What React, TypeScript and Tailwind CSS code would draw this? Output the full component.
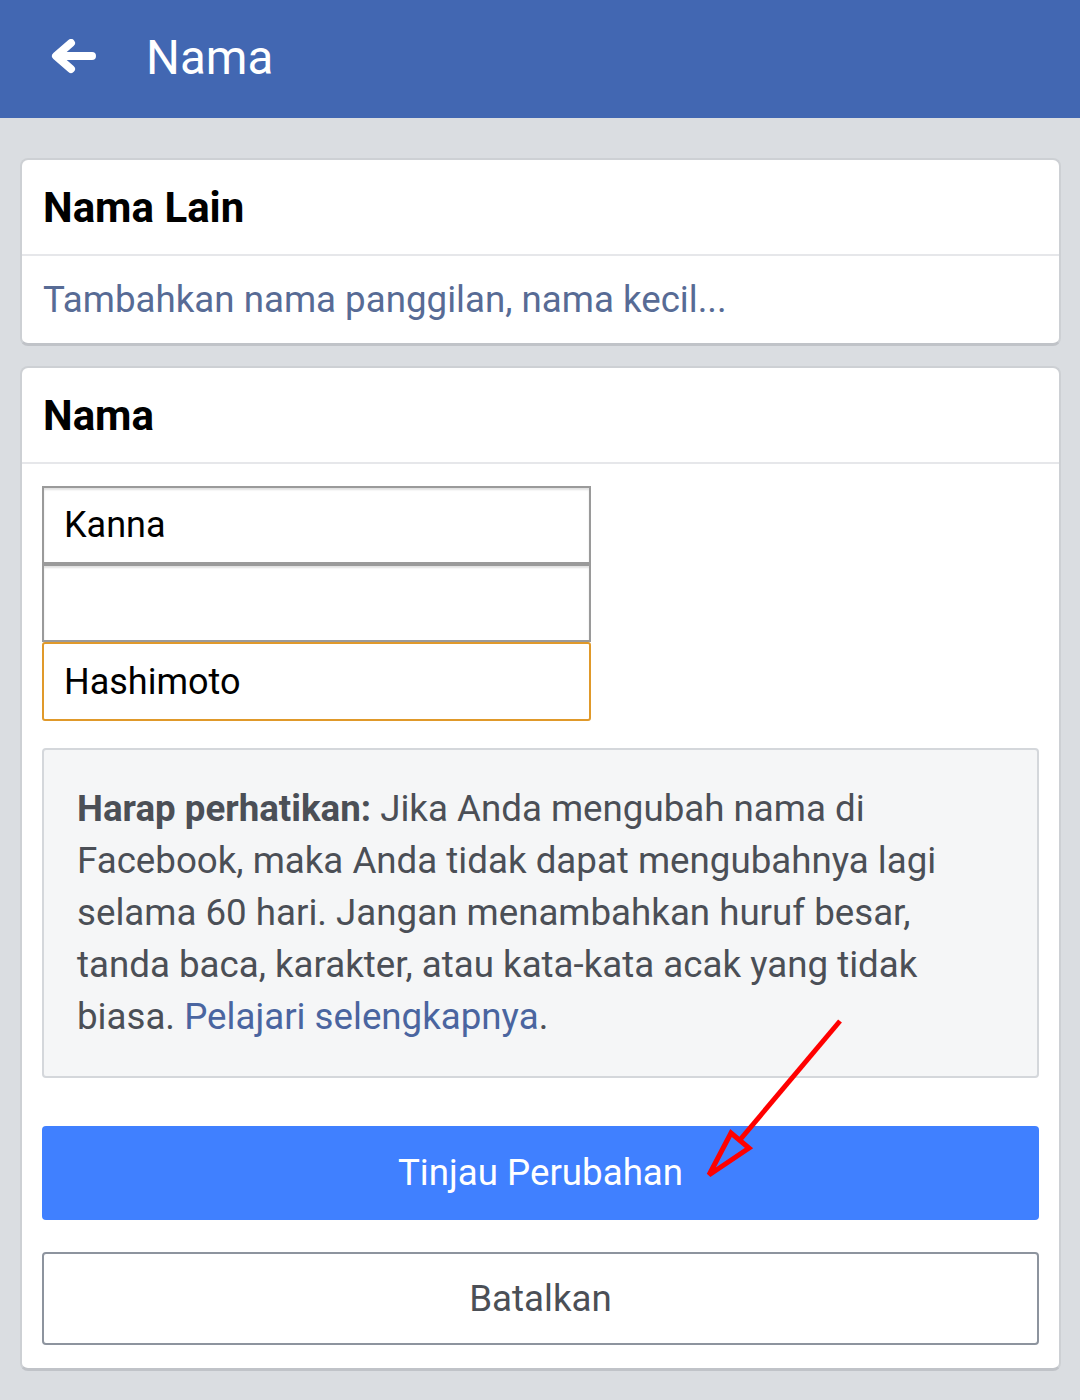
import React from "react";

const font = { fontFamily: "Roboto, 'Noto Sans', Arial, sans-serif" };

function BackArrow() {
  return (
    <svg width="48" height="40" viewBox="0 0 48 40" className="ml-[50px]">
      <path
        d="M42 17 H8 M21 4 L6 17 L21 30"
        fill="none"
        stroke="white"
        strokeWidth="8"
        strokeLinecap="round"
        strokeLinejoin="round"
      />
    </svg>
  );
}

function NameInput({ value, focus }: { value: string; focus?: boolean }) {
  return (
    <div
      className={
        focus
          ? "h-[79px] w-[549px] border-2 border-[#e0992a] rounded-[3px] bg-white flex items-center px-[20px] text-[36px] text-black"
          : "h-[78px] w-[549px] border-2 border-[#9a9a9a] bg-white flex items-center px-[20px] text-[36px] text-black shadow-[inset_0_2px_2px_rgba(0,0,0,0.12)]"
      }
    >
      {value}
    </div>
  );
}

export default function App() {
  return (
    <div className="relative w-[1080px] h-[1400px] bg-[#dadde1] overflow-hidden" style={font}>
      <div className="h-[118px] bg-[#4267b2] flex items-center">
        <BackArrow />
        <span className="ml-[48px] text-white text-[47.5px] leading-none">Nama</span>
      </div>

      <div className="pl-5 pr-[19px] pt-10 flex flex-col gap-5">
        <div className="bg-white rounded-lg border-2 border-[#cdd0d4] border-b-[3px] border-b-[#c0c3c8]">
          <div className="h-[96px] flex items-center px-[21px] border-b-2 border-[#e6e7ea]">
            <span className="text-[42px] font-bold text-black">Nama Lain</span>
          </div>
          <div className="h-[87px] flex items-center px-[21px]">
            <span className="text-[36.7px] text-[#576b95]">Tambahkan nama panggilan, nama kecil...</span>
          </div>
        </div>

        <div className="bg-white rounded-lg border-2 border-[#cdd0d4] border-b-[3px] border-b-[#c0c3c8]">
          <div className="h-[96px] flex items-center px-[21px] border-b-2 border-[#e6e7ea]">
            <span className="text-[42px] font-bold text-black">Nama</span>
          </div>
          <div className="px-5 pt-[22px] pb-[23px]">
            <div className="flex flex-col">
              <NameInput value="Kanna" />
              <NameInput value="" />
              <NameInput value="Hashimoto" focus />
            </div>

            <div className="mt-[27px] h-[330px] bg-[#f5f6f7] border-2 border-[#d4d7db] rounded-[4px] px-[33px] pt-[33px] text-[36.7px] leading-[52px] text-[#4b4f56]">
              <span className="font-bold">Harap perhatikan:</span> Jika Anda mengubah nama di Facebook, maka Anda
              tidak dapat mengubahnya lagi selama 60 hari. Jangan menambahkan huruf besar, tanda baca, karakter,
              atau kata-kata acak yang tidak biasa. <span className="text-[#4a65a0]">Pelajari selengkapnya</span>.
            </div>

            <div className="mt-[48px] h-[94px] bg-[#4080ff] rounded-[4px] flex items-center justify-center text-white text-[36.7px]">
              Tinjau Perubahan
            </div>

            <div className="mt-[32px] h-[93px] border-2 border-[#8d949e] rounded-[4px] flex items-center justify-center text-[#4b4f56] text-[36.7px]">
              Batalkan
            </div>
          </div>
        </div>
      </div>

      <svg className="absolute left-0 top-0 pointer-events-none" width="1080" height="1400">
        <line x1="840" y1="1021" x2="739" y2="1141" stroke="#ff0000" strokeWidth="5" />
        <polygon points="731,1133 749,1148 709,1175" fill="none" stroke="#ff0000" strokeWidth="5" strokeLinejoin="miter" />
      </svg>
    </div>
  );
}
